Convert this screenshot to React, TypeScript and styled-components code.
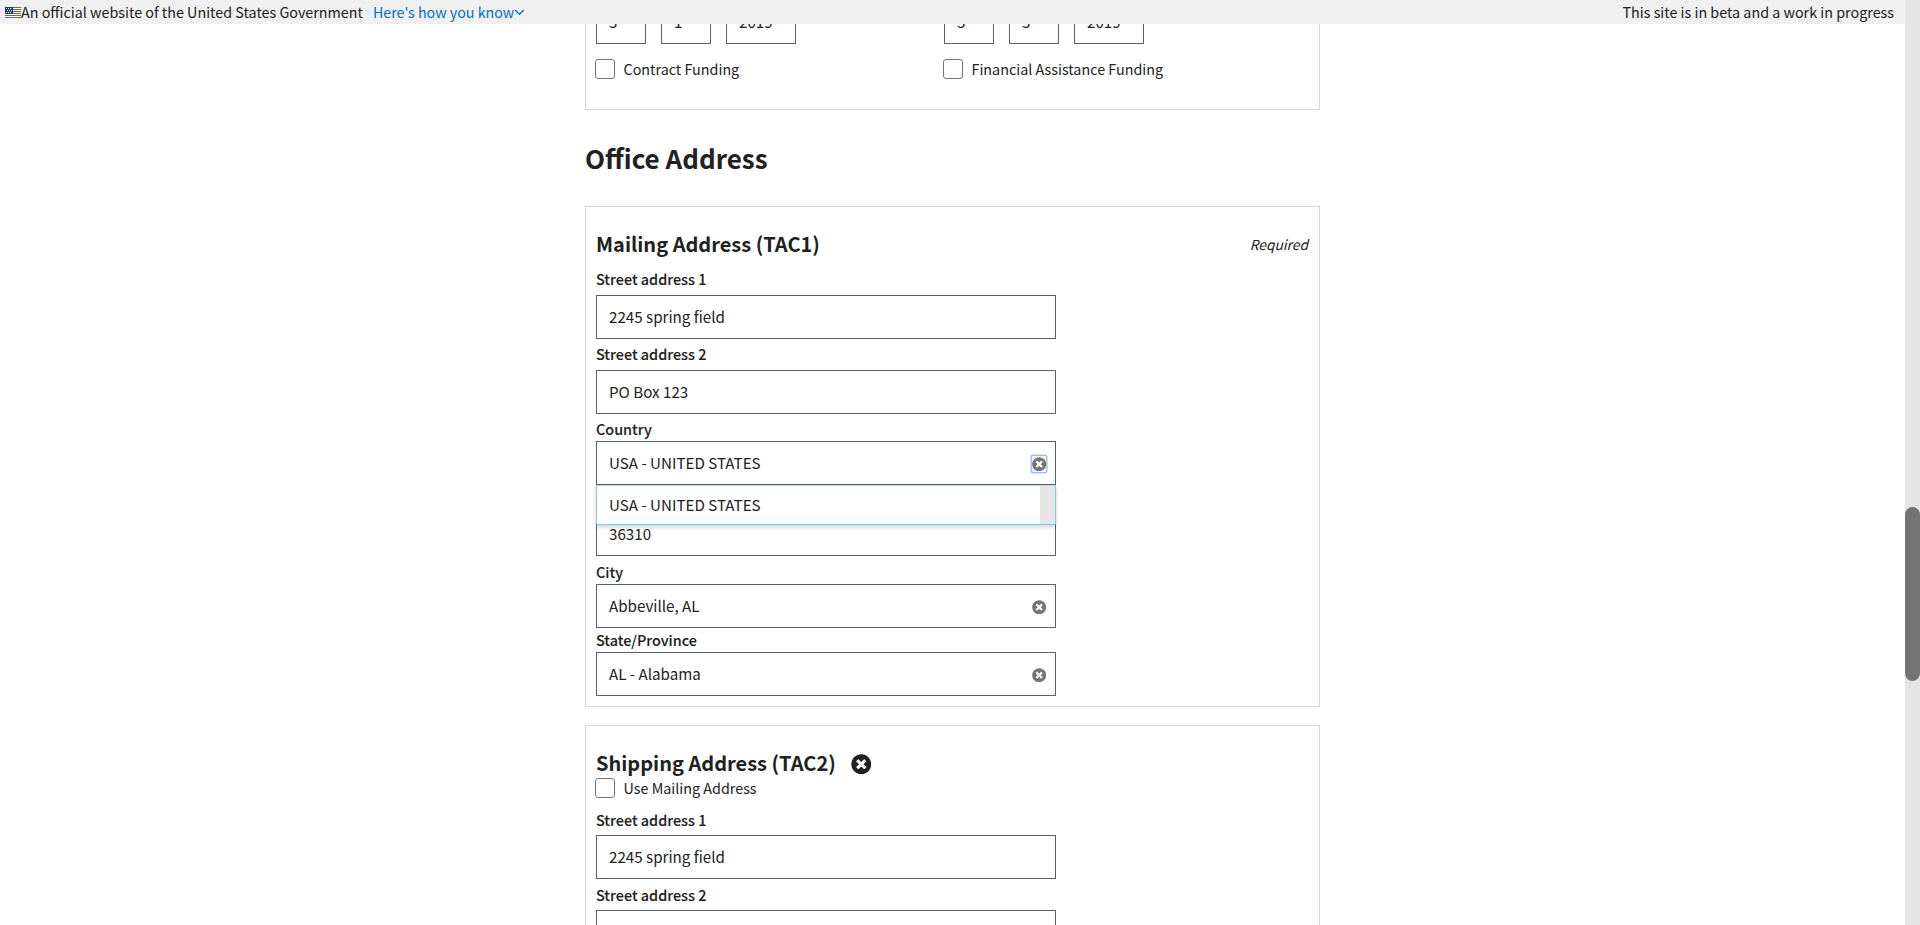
import React from "react";
import styled, { createGlobalStyle, css } from "styled-components";
import { FaTimesCircle } from "react-icons/fa";

const INK = "#212121";
const INPUT_BORDER = "#5b616b";
const PANEL_BORDER = "#d6d7d9";

const GlobalStyle = createGlobalStyle`
  *, *::before, *::after { box-sizing: border-box; }
  body {
    margin: 0;
    background: #fff;
    color: ${INK};
    font-family: "Noto Sans CJK SC", "Noto Sans", sans-serif;
    font-size: 14.33px;
    line-height: 24px;
    overflow: hidden;
  }
`;

const Shell = styled.div`
  display: flex;
  height: 925px;
  overflow: hidden;
`;

const Page = styled.div`
  display: flex;
  flex-direction: column;
  width: 1905px;
  height: 925px;
  overflow: hidden;
`;

const ScrollTrack = styled.div`
  width: 15px;
  height: 925px;
  padding-top: 507px;
  background: #e5e5e5;
`;

const ScrollThumb = styled.div`
  height: 174px;
  border-radius: 7.5px;
  background: #737373;
`;

const Banner = styled.header`
  display: flex;
  flex: none;
  align-items: center;
  height: 24px;
  padding: 0 11px 0 5px;
  background: #f0f0f0;
  white-space: nowrap;
`;

const BannerLink = styled.a`
  display: flex;
  align-items: center;
  margin-left: 10px;
  color: #0071bc;
  font-size: 14.25px;
`;

const BannerNote = styled.span`
  margin-left: auto;
`;

const Scroller = styled.main`
  flex: 1;
  width: 735px;
  margin-left: 585px;
  min-height: 0;
`;

const Panel = styled.section`
  width: 735px;
  border: 1px solid ${PANEL_BORDER};
  padding: 0 10px;
`;

const FundingPanel = styled(Panel)`
  display: grid;
  grid-template-columns: 348px 1fr;
  height: 86px;
  border-top: 0;
`;

const DateRow = styled.div`
  display: flex;
  gap: 15px;
  height: 20px;
`;

const DateBox = styled.div<{ $wide?: boolean }>`
  display: flex;
  align-items: flex-end;
  width: ${({ $wide }) => ($wide ? 70 : 50)}px;
  height: 20px;
  padding: 0 0 10px 12px;
  border: 1px solid ${INPUT_BORDER};
  border-top: 0;
  font-size: 15.17px;
  overflow: hidden;
`;

const CheckRow = styled.div<{ $top?: number }>`
  display: flex;
  align-items: center;
  height: 20px;
  margin: ${({ $top = 0 }) => $top}px 0 0 -1px;
`;

const CheckBox = styled.span`
  width: 20px;
  height: 20px;
  margin-right: 8.5px;
  border: 1px solid #757575;
  border-radius: 3px;
  background: #fff;
`;

const PageHeading = styled.h2`
  margin: 28px 0 29px;
  font-size: 26px;
  font-weight: 700;
  line-height: 39px;
`;

const AddressPanel = styled(Panel)<{ $height: number; $gap?: number }>`
  height: ${({ $height }) => $height}px;
  margin-top: ${({ $gap = 0 }) => $gap}px;
  padding-top: 24px;
`;

const PanelHead = styled.div`
  display: flex;
  align-items: center;
  height: 28px;
`;

const PanelTitle = styled.h3`
  margin: 0;
  padding-bottom: 2px;
  font-size: 20px;
  font-weight: 700;
  line-height: 26px;
`;

const RequiredNote = styled.em`
  margin-left: auto;
  padding: 0 1px 3px 0;
  font-size: 13.8px;
`;

const Remove = styled.span`
  display: flex;
  margin: 0 0 0 15px;
  font-size: 20.5px;
`;

const Fields = styled.div<{ $top: number }>`
  width: 460px;
  margin-top: ${({ $top }) => $top}px;
`;

const Label = styled.label<{ $above: number; $below: number }>`
  display: block;
  padding: ${({ $above }) => $above}px 0 ${({ $below }) => $below}px;
  font-size: 14.4px;
  font-weight: 500;
  -webkit-text-stroke: 0.1px ${INK};
`;

const valueText = css`
  display: flex;
  align-items: center;
  padding: 0 9px 2px 12px;
  font-size: 15.17px;
`;

const Input = styled.div`
  ${valueText}
  position: relative;
  height: 44px;
  border: 1px solid ${INPUT_BORDER};
  background: #fff;
`;

const Clear = styled.span<{ $focused?: boolean }>`
  display: flex;
  margin-left: auto;
  margin-top: 4px;
  font-size: 14.4px;
  color: #757575;
  ${({ $focused }) =>
    $focused &&
    css`
      border-radius: 1px;
      padding: 1px 0;
      box-shadow: 0 0 0 1.5px #9dc1fc;
    `}
`;

const Options = styled.div`
  position: absolute;
  z-index: 2;
  top: 43px;
  left: -1px;
  display: flex;
  width: 460px;
  height: 40px;
  border: 1px solid #8dc5da;
  border-top-color: #c3d6de;
  border-radius: 0 0 2px 2px;
  background: #fff;
  box-shadow: 0 2px 4px rgba(0, 0, 0, 0.18);
`;

const Option = styled.div`
  ${valueText}
  flex: 1;
`;

const OptionTrack = styled.div`
  width: 15px;
  background: #e5e5e5;
`;

const FlagIcon = () => (
  <svg width="16" height="11" viewBox="0 0 16 11" shapeRendering="crispEdges">
    <rect width="16" height="11" fill="#fff" />
    {[0, 2, 4, 6, 8, 10].map((y) => (
      <rect key={y} y={y} width="16" height="1" fill="#db3e1f" />
    ))}
    <rect width="8" height="7" fill="#1e33b1" />
    {[1, 3, 5].map((y) =>
      [1, 3, 5].map((x) => (
        <rect key={`${x}-${y}`} x={y === 3 ? x + 1 : x} y={y} width="1" height="1" fill="#fff" />
      ))
    )}
  </svg>
);

const ChevronIcon = () => (
  <svg width="11" height="7" viewBox="0 0 11 7" fill="none">
    <path d="M1.2 1 L5.5 5.3 L9.8 1" stroke="#0071bc" strokeWidth="1.3" />
  </svg>
);

type FieldProps = {
  label: string;
  value: string;
  above?: number;
  below?: number;
  clearable?: boolean;
  options?: string[];
};

const Field = ({ label, value, above = 3, below = 4, clearable, options }: FieldProps) => (
  <div>
    <Label $above={above} $below={below}>{label}</Label>
    <Input>
      {value}
      {clearable && (
        <Clear $focused={!!options}>
          <FaTimesCircle />
        </Clear>
      )}
      {options && (
        <Options>
          {options.map((option) => (
            <Option key={option}>{option}</Option>
          ))}
          <OptionTrack />
        </Options>
      )}
    </Input>
  </div>
);

const Funding = ({ date, label }: { date: string[]; label: string }) => (
  <div>
    <DateRow>
      <DateBox>{date[0]}</DateBox>
      <DateBox>{date[1]}</DateBox>
      <DateBox $wide>{date[2]}</DateBox>
    </DateRow>
    <CheckRow $top={15}>
      <CheckBox />
      {label}
    </CheckRow>
  </div>
);

export default function App() {
  return (
    <>
      <GlobalStyle />
      <Shell>
        <Page>
          <Banner>
            <FlagIcon />
            <span>An official website of the United States Government</span>
            <BannerLink>
              Here's how you know
              <ChevronIcon />
            </BannerLink>
            <BannerNote>This site is in beta and a work in progress</BannerNote>
          </Banner>
          <Scroller>
            <FundingPanel>
              <Funding date={["3", "1", "2019"]} label="Contract Funding" />
              <Funding date={["3", "3", "2019"]} label="Financial Assistance Funding" />
            </FundingPanel>
            <PageHeading>Office Address</PageHeading>
            <AddressPanel $height={501}>
              <PanelHead>
                <PanelTitle>Mailing Address (TAC1)</PanelTitle>
                <RequiredNote>Required</RequiredNote>
              </PanelHead>
              <Fields $top={5}>
                <Field label="Street address 1" value="2245 spring field" />
                <Field label="Street address 2" value="PO Box 123" />
                <Field
                  label="Country"
                  value="USA - UNITED STATES"
                  below={0}
                  clearable
                  options={["USA - UNITED STATES"]}
                />
                <Field label="" value="36310" above={27} below={0} />
                <Field label="City" value="Abbeville, AL" above={4} below={0} clearable />
                <Field label="State/Province" value="AL - Alabama" above={0} below={0} clearable />
              </Fields>
            </AddressPanel>
            <AddressPanel $height={300} $gap={18}>
              <PanelHead>
                <PanelTitle>Shipping Address (TAC2)</PanelTitle>
                <Remove>
                  <FaTimesCircle />
                </Remove>
              </PanelHead>
              <CheckRow>
                <CheckBox />
                Use Mailing Address
              </CheckRow>
              <Fields $top={6}>
                <Field label="Street address 1" value="2245 spring field" above={4} below={3} />
                <Field label="Street address 2" value="" above={4} below={3} />
              </Fields>
            </AddressPanel>
          </Scroller>
        </Page>
        <ScrollTrack>
          <ScrollThumb />
        </ScrollTrack>
      </Shell>
    </>
  );
}
